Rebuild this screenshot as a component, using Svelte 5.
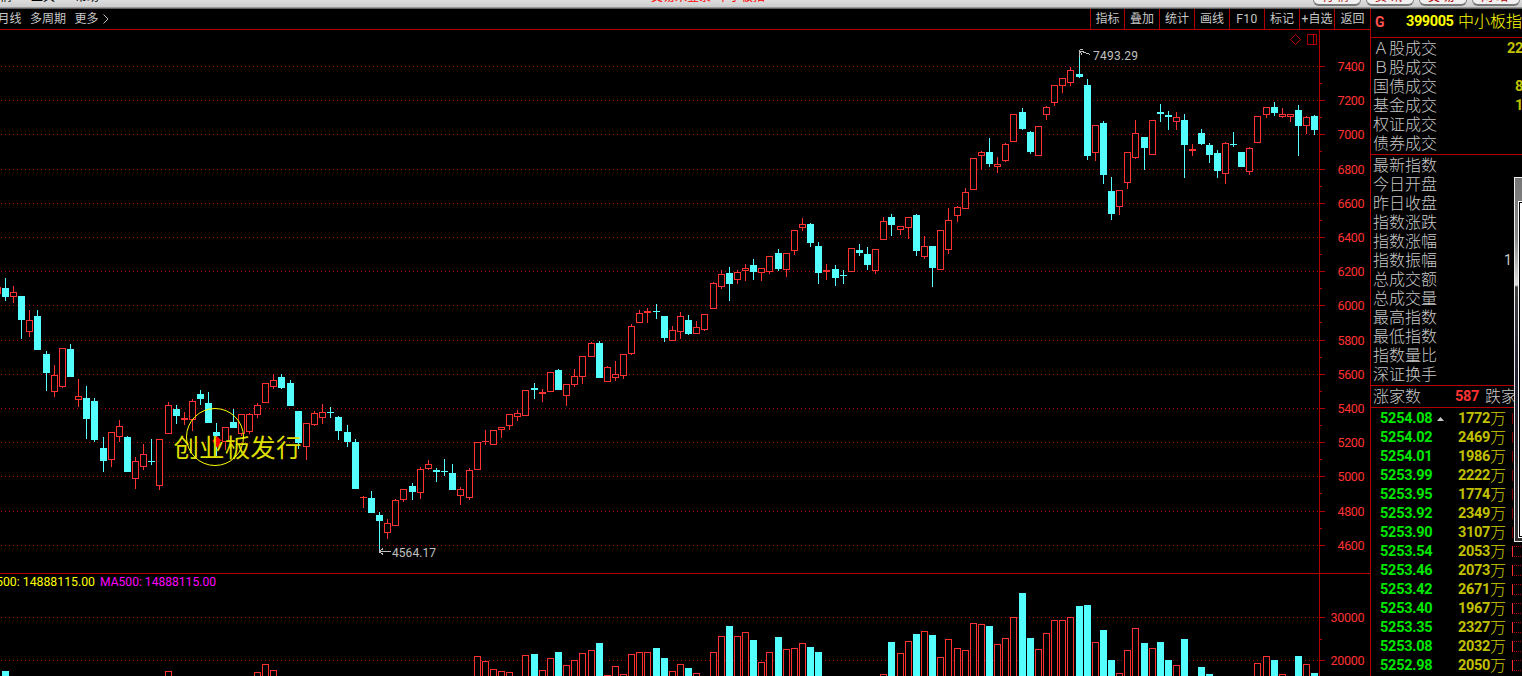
<script>
  // x, high, body top, body bottom, low, kind (r = rising, c = falling)
  const candleData = `-3 287 287 294 294 r;5 278 288 297 301 c;13 286 292 297 303 r;21 296 296 320 339 c;29 310 320 332 337 r;37 310 316 350 350 c;46 351 354 373 391 c;54 365 375 392 397 r;62 348 348 387 388 r;70 344 349 377 377 c;78 379 396 400 407 r;86 386 398 419 439 c;94 398 401 440 442 c;103 437 448 461 472 c;111 432 432 460 467 r;119 420 426 437 442 r;127 436 437 472 472 c;135 457 461 479 489 r;143 444 454 467 470 r;151 439 461 462 465 c;159 439 439 486 490 r;168 402 405 434 434 r;176 405 409 416 424 c;184 412 418 420 425 r;192 399 401 420 431 r;200 390 394 399 405 c;208 392 403 423 423 c;216 423 432 436 456 c;225 427 427 442 450 r;233 409 422 428 428 c;241 414 414 434 436 r;249 413 414 432 434 r;257 403 405 415 418 r;265 383 383 403 403 r;273 374 380 387 389 r;281 374 377 388 389 c;290 380 383 406 406 c;298 411 411 443 449 c;306 423 423 447 460 r;314 411 413 425 426 r;322 404 412 418 424 r;330 407 412 413 418 c;338 416 417 431 440 c;347 425 432 442 447 c;355 439 442 489 489 c;363 496 497 498 508 r;371 491 498 513 513 c;379 512 515 521 550 c;387 519 523 533 539 r;395 499 500 526 526 r;403 489 489 500 502 r;412 483 486 492 500 c;420 467 469 493 499 r;428 460 464 469 470 r;436 468 470 472 482 c;444 459 471 472 476 c;452 464 473 490 490 c;460 487 489 496 505 r;469 468 470 498 500 r;477 442 442 470 470 r;485 430 441 442 445 r;493 430 430 445 445 r;501 427 427 430 438 r;509 414 414 426 430 r;517 410 413 417 421 r;525 390 390 416 416 r;534 383 388 390 399 c;542 389 392 394 402 r;550 372 372 392 392 r;558 369 370 390 390 c;566 384 384 396 406 r;574 369 376 385 387 r;582 356 356 377 384 r;591 342 343 357 357 r;599 341 343 378 378 c;607 366 367 382 382 r;615 361 374 378 381 r;623 354 354 376 379 r;631 324 326 354 355 r;639 310 313 323 323 r;647 308 311 313 323 r;656 304 311 312 319 c;664 316 316 338 342 c;672 326 330 341 341 r;680 312 316 332 339 r;688 315 320 334 335 c;696 321 327 334 334 r;704 314 314 330 331 r;713 282 283 309 309 r;721 270 274 287 289 r;729 267 273 284 301 c;737 270 272 280 284 r;745 264 268 271 281 r;753 259 265 272 280 c;761 268 268 273 281 r;769 256 256 272 274 r;778 249 253 269 271 c;786 253 253 270 277 r;794 230 230 251 255 r;802 218 224 228 231 r;810 223 224 243 247 c;818 242 246 273 284 c;826 264 270 272 280 r;835 265 269 278 286 c;843 270 275 276 284 c;851 248 248 272 272 r;859 244 250 253 256 c;867 247 254 265 270 c;875 249 249 271 274 r;883 217 221 240 240 r;891 214 217 225 236 c;900 226 226 230 235 r;908 217 217 228 239 r;916 214 215 251 256 c;924 236 246 257 259 r;932 246 246 268 287 c;940 230 230 270 270 r;948 208 220 250 254 r;957 206 207 216 222 r;965 188 192 209 209 r;973 158 158 190 190 r;981 151 152 156 170 r;989 138 152 164 167 c;997 157 164 167 173 r;1005 143 144 161 162 r;1013 114 114 142 142 r;1022 108 112 129 130 c;1030 131 132 152 154 c;1038 126 126 156 156 r;1046 106 107 115 120 r;1054 85 85 103 106 r;1062 78 78 86 93 r;1070 67 70 83 86 r;1079 52 74 77 78 c;1087 79 85 156 160 c;1095 125 125 153 161 r;1103 121 123 175 184 c;1111 177 191 214 220 c;1119 190 190 207 215 r;1127 152 152 183 189 r;1135 120 133 158 159 r;1144 137 137 148 170 c;1152 120 120 155 155 r;1160 104 112 114 122 c;1168 111 115 117 130 c;1176 112 117 122 130 r;1184 114 120 145 178 c;1192 144 149 151 156 r;1201 129 133 144 145 c;1209 143 145 155 163 c;1217 150 153 171 178 c;1225 142 143 174 184 r;1233 132 144 145 147 c;1241 152 152 167 167 c;1249 147 148 172 175 r;1257 116 116 143 143 r;1266 107 107 115 118 r;1274 102 107 113 116 c;1282 108 114 117 118 r;1290 114 114 117 122 r;1298 105 110 126 156 c;1306 116 117 126 134 r;1314 115 116 130 135 c`;
  const volumeData = `5 671 c;168 671 r;257 672 r;265 664 r;273 670 r;477 656 r;485 661 r;493 669 r;501 671 r;509 672 r;525 655 r;534 654 c;542 670 r;550 658 r;558 652 c;566 665 r;574 660 r;582 653 r;591 650 r;599 643 c;607 675 r;615 666 r;623 674 r;631 654 r;639 652 r;647 652 r;656 648 c;664 658 c;672 671 r;680 664 r;688 668 c;696 673 r;713 652 r;721 636 r;729 626 c;737 636 r;745 632 r;753 640 c;761 662 r;769 652 r;778 637 c;786 649 r;794 648 r;802 643 r;810 647 c;818 652 c;883 674 r;891 642 c;900 653 r;908 641 r;916 634 c;924 631 r;932 635 c;940 657 r;948 639 r;957 648 r;965 650 r;973 623 r;981 624 r;989 626 c;997 644 r;1005 638 r;1013 617 r;1022 593 c;1030 638 c;1038 649 r;1046 633 r;1054 620 r;1062 620 r;1070 617 r;1079 606 c;1087 605 c;1095 642 r;1103 630 c;1111 660 c;1119 673 r;1127 650 r;1135 628 r;1144 643 c;1152 648 r;1160 642 c;1168 660 c;1176 665 r;1184 639 c;1201 667 c;1209 674 c;1257 663 r;1266 656 r;1274 660 c;1282 674 r;1298 656 c;1306 664 r;1314 673 c`;

  const candles = candleData.split(';').map((s) => {
    const [x, h, t, b, l, k] = s.split(' ');
    return { x: +x, h: +h, t: +t, b: +b, l: +l, up: k === 'r' };
  });
  const volumes = volumeData.split(';').map((s) => {
    const [x, t, k] = s.split(' ');
    return { x: +x, t: +t, up: k === 'r' };
  });

  const priceLevels = [66, 100, 134, 169, 203, 237, 271, 305, 340, 374, 408, 442, 476, 511, 545].map(
    (y, i) => ({ y, label: String(7400 - i * 200) })
  );
  const volumeLevels = [
    { y: 617, label: '30000' },
    { y: 660, label: '20000' }
  ];
  const levels = [...priceLevels, ...volumeLevels];
  const minorTicks = [...priceLevels.slice(0, -1).map((p) => p.y + 17), 639];

  const tools = ['指标', '叠加', '统计', '画线', 'F10', '标记', '+自选', '返回'];
  const headerButtons = ['行情', '资讯', '交易', '网站'];
  const turnover = [
    ['Ａ股成交', '22', 1507],
    ['Ｂ股成交', '', 0],
    ['国债成交', '8', 1515],
    ['基金成交', '1', 1515],
    ['权证成交', '', 0],
    ['债券成交', '', 0]
  ];
  const indexRows = ['最新指数', '今日开盘', '昨日收盘', '指数涨跌', '指数涨幅', '指数振幅', '总成交额', '总成交量', '最高指数', '最低指数', '指数量比', '深证换手'];
  const ticks = [
    ['5254.08', '1772'], ['5254.02', '2469'], ['5254.01', '1986'], ['5253.99', '2222'],
    ['5253.95', '1774'], ['5253.92', '2349'], ['5253.90', '3107'], ['5253.54', '2053'],
    ['5253.46', '2073'], ['5253.42', '2671'], ['5253.40', '1967'], ['5253.35', '2327'],
    ['5253.08', '2032'], ['5252.98', '2050']
  ];
</script>

<div class="app">
  <header class="menubar">
    <nav class="menus"><span>情</span><span>工具</span><span>帮助</span></nav>
    <div class="caption">交易未登录&nbsp; 中小板指</div>
    <div class="buttons">
      {#each headerButtons as b}<button>{b}</button>{/each}
    </div>
  </header>

  <div class="body">
    <main>
      <div class="toolbar">
        <div class="periods"><span>月线</span><span>多周期</span><span>更多</span>
          <svg width="6" height="10" viewBox="0 0 6 10"><path d="M.5 .5 5 5 .5 9.5" /></svg>
        </div>
        <div class="tools">
          {#each tools as t}<span class:narrow={t === 'F10'} class:first={t === '指标'}>{t}</span>{/each}
        </div>
      </div>

      <svg class="chart" width="1370" height="646" viewBox="0 30 1370 646">
        <g shape-rendering="crispEdges">
          {#each levels as l}
            <line class="grid" x1="1" x2="1319" y1={l.y + 0.5} y2={l.y + 0.5} />
            <rect class="line" x="1319" y={l.y} width="6" height="1" />
          {/each}
          {#each minorTicks as y}
            <rect class="line" x="1319" y={y} width="3" height="1" />
          {/each}
          <rect class="line" x="1319" y="30" width="1" height="646" />
          <rect class="line" x="0" y="573" width="1370" height="1" />

          {#each candles as c}
            <rect class={c.up ? 'up' : 'down'} x={c.x} y={c.h} width="1" height={c.l - c.h} />
            {#if c.up && c.b - c.t > 2}
              <rect class="hollow" x={c.x - 2.5} y={c.t + 0.5} width="6" height={c.b - c.t - 1} />
            {:else}
              <rect class={c.up ? 'up' : 'down'} x={c.x - 3} y={c.t} width="7" height={c.b - c.t} />
            {/if}
          {/each}
          {#each volumes as v}
            {#if v.up}
              <rect class="hollow" x={v.x - 2.5} y={v.t + 0.5} width="6" height={690 - v.t} />
            {:else}
              <rect class="down" x={v.x - 3} y={v.t} width="7" height={690 - v.t} />
            {/if}
          {/each}
        </g>

        {#each levels as l}
          <text class="axis" x={l.label.length > 4 ? 1330.5 : 1337.5} y={l.y + 5} textLength={l.label.length > 4 ? 34 : 27}>{l.label}</text>
        {/each}

        <g class="marker" shape-rendering="crispEdges">
          <path d="M1079.5 57V50M1080 51.5h2l3 1 5 2M1080 49.5h3M1080 52l2 2.5" />
          <path d="M379.5 549V553M380 551.5h11M380 551l3-2.5M380 552l3 2.5" />
        </g>
        <text class="note" x="1093" y="60" textLength="45">7493.29</text>
        <text class="note" x="392" y="557" textLength="44">4564.17</text>

        <path d="M217 436l5 5h-2v4l-3 3-1-2v-3l-4-2z" class="gem" />
        <text class="cjk-note" x="173.5" y="456.5" textLength="128">创业板发行</text>
        <circle cx="215" cy="437" r="28.5" class="ring" />

        <text class="ma yellow" x="-4" y="585.5" textLength="99" lengthAdjust="spacingAndGlyphs">500: 14888115.00</text>
        <text class="ma magenta" x="100" y="585.5" textLength="116" lengthAdjust="spacingAndGlyphs">MA500: 14888115.00</text>

        <g class="corner" shape-rendering="crispEdges">
          <path d="M1295.5 34.5l5 5-5 5-5-5z" />
          <path d="M1307.5 34.5h9v10h-9zM1313.5 34.5v10" />
        </g>
      </svg>
    </main>

    <aside>
      <div class="title"><b class="flag">G</b><b class="code">399005</b><span>中小板指</span></div>
      <div class="group turnover">
        {#each turnover as [name, value, x]}
          <div class="row"><span class="label">{name}</span><b class="value" style="margin-left:{x ? x - 1437 : 0}px">{value}</b></div>
        {/each}
      </div>
      <div class="group indices">
        {#each indexRows as name}
          <div class="row"><span class="label">{name}</span>{#if name === '指数振幅'}<span class="amp">1</span>{/if}</div>
        {/each}
      </div>
      <div class="breadth"><span>涨家数</span><b>587</b><span>跌家</span></div>
      <div class="ticks">
        {#each ticks as [price, vol], i}
          <div class="tick">
            <b class="price">{price}</b>
            <span class="arrow">{#if i === 0}<svg width="7" height="4" viewBox="0 0 7 4"><path d="M0 4 3.5 0 7 4z" /></svg>{/if}</span>
            <b class="vol">{vol}</b><span class="unit">万</span>
            <i class="box" class:dim={i < 7}></i>
          </div>
        {/each}
      </div>
      <div class="panel"><div class="panel-inner"></div></div>
    </aside>
  </div>
</div>

<style>
  :global(body) { background: #000; overflow: hidden; }
  .app {
    width: 1522px; height: 676px; overflow: hidden; background: #000; color: #c8c8c8;
    font-family: Roboto, "Noto Sans CJK SC", sans-serif;
    display: flex; flex-direction: column;
  }
  .menubar {
    height: 9px; box-sizing: border-box; flex: none; overflow: hidden; display: grid;
    grid-template-columns: 651px 1fr auto; grid-template-rows: 8px; align-items: end;
    background: linear-gradient(#dedede, #cdcdcd 7px);
    border-bottom: 1px solid #606060; box-shadow: inset 0 -1px #989898;
    font-size: 12px; line-height: 14px; white-space: nowrap;
  }
  .menus { display: flex; color: #000; padding-bottom: 4px; }
  .menus span:nth-child(1) { width: 31px; }
  .menus span:nth-child(2) { width: 44px; }
  .caption { color: #f00; padding-bottom: 4px; }
  .buttons { display: flex; gap: 5px; padding: 0 2px 2px 0; }
  .buttons button {
    width: 48px; height: 20px; box-sizing: border-box; padding: 0; border: 1px solid #888; border-bottom: 2px solid #777;
    border-radius: 6px; background: linear-gradient(#fff, #eee); color: #b00000;
    font: 12px/14px "Noto Sans CJK SC", sans-serif; letter-spacing: 3px;
  }
  .body { display: flex; flex: 1; min-height: 0; }
  main { width: 1370px; flex: none; }
  .toolbar {
    height: 21px; box-sizing: border-box; border-bottom: 1px solid #b00000; display: flex;
    justify-content: space-between; overflow: hidden; font-size: 12px; line-height: 21px; white-space: nowrap;
  }
  .periods { display: flex; gap: 8.5px; margin-left: -2.5px; align-items: center; }
  .periods svg { margin-left: -4px; fill: none; stroke: #c0c0c0; }
  .tools { display: flex; width: 280px; }
  .tools span { width: 35px; box-sizing: border-box; border-left: 1px solid #b00000; text-align: center; }
  .tools .first { width: 34px; }
  .tools span:last-child { width: 36px; }
  .tools .narrow { letter-spacing: .5px; }
  .chart { display: block; }
  .grid { stroke: #b00000; stroke-dasharray: 1 3; }
  .line { fill: #b00000; }
  .up { fill: #ff3232; }
  .down { fill: #54ffff; }
  .hollow { fill: #000; stroke: #ff3232; }
  .axis { fill: #ff3232; font-size: 12.5px; }
  .note { fill: #c0c0c0; font-size: 12px; }
  .marker path { fill: none; stroke: #c0c0c0; }
  .cjk-note { font-family: "Noto Sans CJK SC", sans-serif; font-size: 25.5px; fill: #dede00; }
  .ring { fill: none; stroke: #ff0; }
  .gem { fill: #f00; }
  .ma { font-size: 12px; }
  .yellow { fill: #ff0; }
  .magenta { fill: #f0f; }
  .corner path { fill: none; stroke: #b00000; }
  aside {
    width: 152px; box-sizing: border-box; border-left: 1px solid #b00000; position: relative; overflow: hidden;
    font-size: 16px; font-weight: 300; white-space: nowrap;
  }
  aside b { font-weight: 700; }
  .title {
    height: 29px; box-sizing: border-box; border-bottom: 1px solid #b00000; display: flex; align-items: center;
    color: #ff0; line-height: 26px; padding: 0 0 2px 4px;
  }
  .flag { width: 31px; color: #ff5050; font-size: 14px; }
  .code { width: 52px; font-size: 14.5px; letter-spacing: -.4px; }
  .group { box-sizing: border-box; border-bottom: 1px solid #b00000; padding-left: 2px; }
  .turnover { height: 117px; padding-top: 1px; }
  .indices { height: 231px; padding-top: 1px; }
  .row { display: flex; height: 19px; line-height: 19px; }
  .label { width: 64px; flex: none; }
  .value { color: #c0c000; font-size: 14.5px; letter-spacing: -.3px; }
  .amp { margin-left: 67px; font-size: 14px; font-weight: 400; }
  .breadth {
    display: flex; height: 22px; box-sizing: border-box; border-bottom: 1px solid #b00000; line-height: 21px; padding-left: 2px;
  }
  .breadth span:first-child { width: 82px; }
  .breadth b { width: 30px; color: #ff3232; font-size: 14.5px; letter-spacing: -.3px; }
  .ticks { padding-left: 9px; }
  .tick { display: flex; height: 19px; line-height: 19px; align-items: center; }
  .tick:first-child { padding-top: 1px; }
  .price { width: 57px; flex: none; color: #00e600; font-size: 14.5px; letter-spacing: -.25px; }
  .arrow { width: 7px; flex: none; margin-right: 14px; line-height: 0; }
  .arrow path { fill: #c8c8c8; }
  .vol { width: 32px; flex: none; color: #c0c000; font-size: 14.5px; letter-spacing: -.35px; }
  .unit { color: #d0d000; width: 22px; flex: none; }
  .box { width: 12px; flex: none; height: 11px; box-sizing: border-box; border-left: 1px solid #ff3232; background:
    repeating-linear-gradient(90deg, transparent 0 1px, #b00000 1px 2px) 0 0 / 100% 1px no-repeat,
    repeating-linear-gradient(90deg, transparent 0 1px, #b00000 1px 2px) 0 100% / 100% 1px no-repeat; }
  .box.dim { border-color: #800000; background: none; }
  .panel {
    position: absolute; left: 143px; top: 168px; width: 20px; height: 365px; box-sizing: border-box;
    border: 1px solid #eee; background: linear-gradient(#777 0, #888 60px, #ddd 107px, #444 109px, #223 200px, #333);
    padding: 23px 0 3px 3px;
  }
  .panel-inner { height: 100%; box-sizing: border-box; border: 1px solid #fff; background: #fff; box-shadow: inset 0 0 0 1px #000; }
</style>
